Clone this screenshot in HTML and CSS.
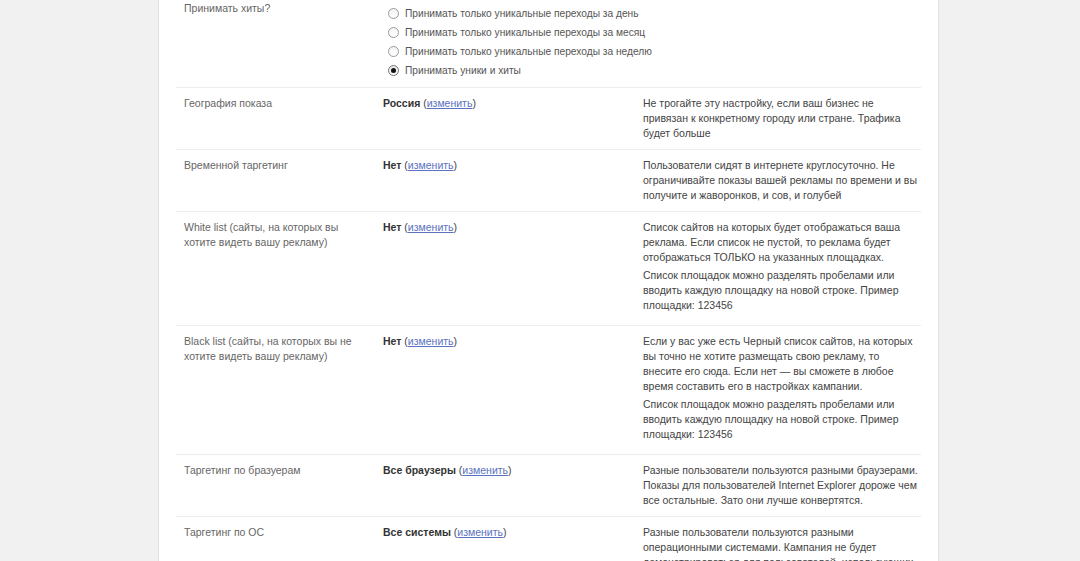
FILE: index.html
```html
<!DOCTYPE html>
<html lang="ru">
<head>
<meta charset="utf-8">
<title>Настройки кампании</title>
<link rel="stylesheet" href="styles.css">
</head>
<body>
<div class="panel">
  <div class="row row-first">
    <div class="label">Принимать хиты?</div>
    <div class="value">
      <ul class="radios">
        <li class="radio"><span class="dot"></span>Принимать только уникальные переходы за день</li>
        <li class="radio"><span class="dot"></span>Принимать только уникальные переходы за месяц</li>
        <li class="radio"><span class="dot"></span>Принимать только уникальные переходы за неделю</li>
        <li class="radio checked"><span class="dot"></span>Принимать уники и хиты</li>
      </ul>
    </div>
    <div class="note"></div>
  </div>

  <div class="row">
    <div class="label">География показа</div>
    <div class="value"><b>Россия</b> (<a href="#">изменить</a>)</div>
    <div class="note">Не трогайте эту настройку, если ваш бизнес не<br>привязан к конкретному городу или стране. Трафика<br>будет больше</div>
  </div>

  <div class="row">
    <div class="label">Временной таргетинг</div>
    <div class="value"><b>Нет</b> (<a href="#">изменить</a>)</div>
    <div class="note">Пользователи сидят в интернете круглосуточно. Не<br>ограничивайте показы вашей рекламы по времени и вы<br>получите и жаворонков, и сов, и голубей</div>
  </div>

  <div class="row">
    <div class="label">White list (сайты, на которых вы<br>хотите видеть вашу рекламу)</div>
    <div class="value"><b>Нет</b> (<a href="#">изменить</a>)</div>
    <div class="note">
      <p>Список сайтов на которых будет отображаться ваша<br>реклама. Если список не пустой, то реклама будет<br>отображаться ТОЛЬКО на указанных площадках.</p>
      <p>Список площадок можно разделять пробелами или<br>вводить каждую площадку на новой строке. Пример<br>площадки: 123456</p>
    </div>
  </div>

  <div class="row">
    <div class="label">Black list (сайты, на которых вы не<br>хотите видеть вашу рекламу)</div>
    <div class="value"><b>Нет</b> (<a href="#">изменить</a>)</div>
    <div class="note">
      <p>Если у вас уже есть Черный список сайтов, на которых<br>вы точно не хотите размещать свою рекламу, то<br>внесите его сюда. Если нет — вы сможете в любое<br>время составить его в настройках кампании.</p>
      <p>Список площадок можно разделять пробелами или<br>вводить каждую площадку на новой строке. Пример<br>площадки: 123456</p>
    </div>
  </div>

  <div class="row">
    <div class="label">Таргетинг по бразуерам</div>
    <div class="value"><b>Все браузеры</b> (<a href="#">изменить</a>)</div>
    <div class="note">Разные пользователи пользуются разными браузерами.<br>Показы для пользователей Internet Explorer дороже чем<br>все остальные. Зато они лучше конвертятся.</div>
  </div>

  <div class="row">
    <div class="label">Таргетинг по ОС</div>
    <div class="value"><b>Все системы</b> (<a href="#">изменить</a>)</div>
    <div class="note">Разные пользователи пользуются разными<br>операционными системами. Кампания не будет<br>демонстрироваться для пользователей, использующих<br>выбранные операционные системы.</div>
  </div>
</div>
</body>
</html>
```

FILE: styles.css
```css
html, body {
  margin: 0;
  padding: 0;
  height: 100%;
  overflow: hidden;
}

body {
  background: #f1f1f1;
  font-family: "Liberation Sans", Arial, sans-serif;
  font-size: 10.5px;
  line-height: 15px;
  color: #444;
}

.panel {
  box-sizing: border-box;
  width: 781px;
  min-height: 100%;
  margin-left: 158px;
  padding: 0 17px;
  background: #fff;
  border-left: 1px solid #e2e2e2;
  border-right: 1px solid #e2e2e2;
}

.row {
  display: grid;
  grid-template-columns: 199px 260px 1fr;
  padding: 8px 8px 8px;
  border-bottom: 1px solid #ececec;
}

.row-first {
  padding-top: 1px;
  padding-bottom: 7px;
}

.label {
  color: #666;
}

.value {
  color: #444;
}

.value b {
  color: #333;
  font-weight: bold;
}

.value a {
  color: #5a72c0;
  text-decoration: underline;
}

.note {
  color: #444;
  white-space: nowrap;
}

.note p {
  margin: 0 0 3px;
}

.note p:last-child {
  margin-bottom: 4px;
}

.radios {
  list-style: none;
  margin: 3px 0 0;
  padding: 0 0 0 5px;
}

.radio {
  display: flex;
  align-items: center;
  height: 19px;
  white-space: nowrap;
  font-size: 10.2px;
  color: #555;
}

.dot {
  flex: none;
  box-sizing: border-box;
  width: 11px;
  height: 11px;
  margin-right: 6px;
  border: 1px solid #9a9a9a;
  border-radius: 50%;
  background: linear-gradient(#f4f4f4, #ffffff);
  display: flex;
  align-items: center;
  justify-content: center;
}

.radio.checked .dot {
  border-color: #777;
  background: linear-gradient(#e6e6e6, #fafafa);
}

.radio.checked .dot::after {
  content: "";
  width: 5px;
  height: 5px;
  border-radius: 50%;
  background: #111;
}
```
